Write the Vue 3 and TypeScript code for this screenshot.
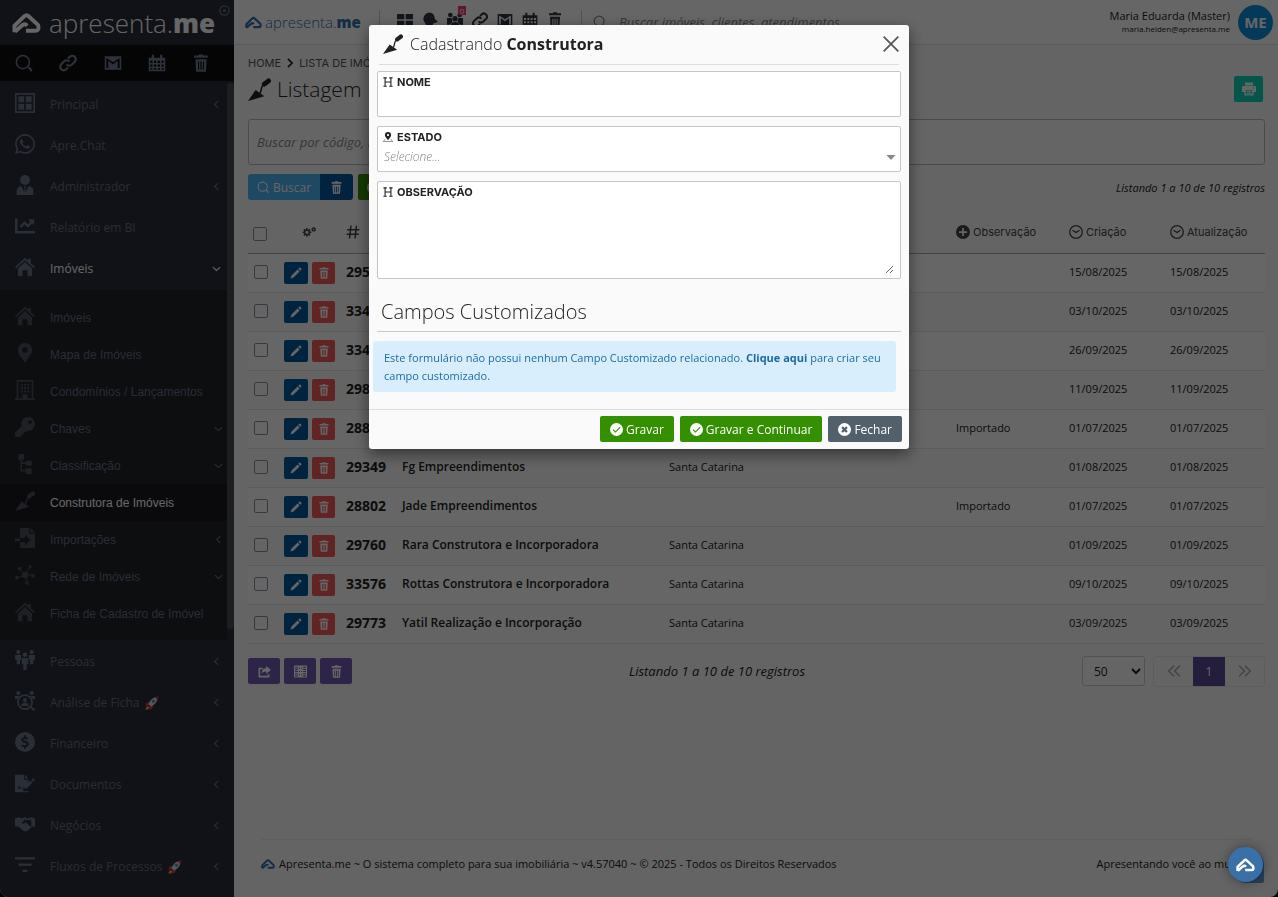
<script setup lang="ts">
import { h, ref } from 'vue'

interface Glyph {
  vb?: string
  d?: string
  s?: string
  w?: number
}

const glyphs: Record<string, Glyph> = {
  logo: { vb: '0 0 30 22', s: 'M2.5 20.5V14L12.8 4Q15 2 17.2 4L27 13.2Q28.6 19 24.5 19H14.5M3 20L10.8 13.2Q13.5 11.2 15.8 13.8', w: 4 },
  target: { s: 'M12 2a10 10 0 1 0 0 20a10 10 0 1 0 0-20zM12 10a2 2 0 1 0 0 4a2 2 0 1 0 0-4z', w: 3 },
  search: { s: 'M10.5 2a8.5 8.5 0 1 0 0 17a8.5 8.5 0 1 0 0-17zM17 17l5 5', w: 2 },
  finder: { s: 'M10.5 2a8.8 8.8 0 1 0 0 17.6a8.8 8.8 0 1 0 0-17.6z', d: 'M17 18.5l2-2l4.5 4.5l-2 2.5z', w: 2 },
  link: { s: 'M10 14a5 5 0 0 0 7 .3l4-4a4.6 4.6 0 0 0-6.6-6.6l-2.4 2.3M14 10a5 5 0 0 0-7-.3l-4 4a4.6 4.6 0 0 0 6.6 6.6l2.4-2.3', w: 3 },
  mail: { d: 'M1 3h22v18H1zM3.2 5.2v13.6h2.6V9l6.2 5l6.2-5v9.800h2.600V5.200L12 11z' },
  calendar: { d: 'M1 5h4V1h3v4h8V1h3v4h4v18H1zM3 9v3h3V9zM8 9v3h3V9zM13 9v3h3V9zM18 9v3h3V9zM3 14v3h3v-3zM8 14v3h3v-3zM13 14v3h3v-3zM18 14v3h3v-3zM3 19v2h3v-2zM8 19v2h3v-2zM13 19v2h3v-2zM18 19v2h3v-2z' },
  trash: { d: 'M3 2h6V0.500h6V2h6v3H3zM4.500 7h15l-1 16.500h-13zM8 10v11h1.500V10zM11.200 10v11h1.600V10zM14.500 10v11H16V10z' },
  panel: { d: 'M0 0h24v24H0zM2 2v20h20V2zM4 4h7v7H4zM13 4h7v7h-7zM4 13h7v7H4zM13 13h7v7h-7z' },
  tiles: { d: 'M0 3h11v8H0zM13 3h11v8H13zM0 13h11v8H0zM13 13h11v8H13z' },
  whatsapp: { vb: '0 32 448 448', d: 'M380.9 97.1C339 55.1 283.2 32 223.9 32c-122.4 0-222 99.6-222 222 0 39.1 10.2 77.3 29.6 111L0 480l117.7-30.9c32.400 17.700 68.900 27 106.100 27h.1c122.300 0 224.100-99.600 224.100-222 0-59.300-25.200-115-67.100-157zm-157 341.600c-33.200 0-65.700-8.900-94-25.700l-6.700-4-69.800 18.300L72 359.200l-4.400-7c-18.500-29.400-28.200-63.300-28.200-98.200 0-101.700 82.800-184.500 184.600-184.500 49.300 0 95.600 19.200 130.400 54.100 34.800 34.900 56.200 81.200 56.100 130.500 0 101.800-84.900 184.600-186.600 184.600zm101.200-138.200c-5.500-2.800-32.800-16.200-37.900-18-5.100-1.900-8.800-2.800-12.500 2.800-3.700 5.600-14.300 18-17.600 21.800-3.200 3.700-6.500 4.200-12 1.400-32.600-16.300-54-29.100-75.500-66-5.700-9.800 5.700-9.100 16.300-30.300 1.800-3.700.9-6.900-.5-9.700-1.400-2.800-12.500-30.100-17.100-41.200-4.500-10.800-9.100-9.300-12.500-9.500-3.200-.2-6.900-.2-10.600-.2-3.700 0-9.700 1.400-14.800 6.900-5.100 5.600-19.400 19-19.400 46.300 0 27.300 19.900 53.700 22.600 57.400 2.800 3.700 39.100 59.700 94.800 83.800 35.200 15.200 49 16.500 66.600 13.900 10.700-1.600 32.800-13.400 37.400-26.400 4.600-13 4.600-24.100 3.200-26.400-1.300-2.500-5-3.900-10.500-6.600z' },
  person: { d: 'M12 0a6 6 0 1 1 0 12a6 6 0 1 1 0-12zM2 24v-5q0-5.500 6-5.500l3 7l.500-4.500l-1-2.500h3l-1 2.500l.500 4.500l3-7q6 0 6 5.500v5z' },
  chart: { d: 'M0 3h3v15h21v3H0zM16 4h7v7l-2.200-2.200l-5.300 5.300l-4-4l-4 4L5.500 12L11.500 6l4 4l2.800-3z' },
  house: { d: 'M0 12L12 1l3.500 3.200V2h3.500v5.500L24 12l-1.400 1.600L12 4L1.400 13.600zM12 6l8.500 7.700V22q0 1-1 1H15v-7H9v7H4.500q-1 0-1-1v-8.300z' },
  pin: { d: 'M12 0c5 0 8.500 3.600 8.500 8.300C20.500 14 15 18 12 24C9 18 3.500 14 3.500 8.300C3.500 3.600 7 0 12 0zM12 5a3.300 3.300 0 1 0 0 6.600A3.300 3.300 0 1 0 12 5z' },
  building: { d: 'M2 0h20v22h2v2H0v-2h2zM4 2v20h5v-5h6v5h5V2zM7 4.500h2.500v2.500H7zM14.500 4.500H17V7h-2.500zM7 8.500h2.500V11H7zM14.500 8.500H17V11h-2.500zM7 12.500h2.500V15H7zM14.500 12.500H17V15h-2.500zM10.800 4.500h2.400V7h-2.400zM10.800 8.500h2.400V11h-2.400zM10.800 12.500h2.400V15h-2.400z' },
  key: { vb: '0 0 512 512', d: 'M512 176C512 273.200 433.200 352 336 352c-11.200 0-22.200-1-32.800-3l-24 27A24 24 0 0 1 261 384H224v40c0 13-11 24-24 24h-40v40c0 13-11 24-24 24H24c-13 0-24-11-24-24v-78c0-6.400 2.500-12.500 7-17l161.800-161.800C163 213.800 160 195 160 176 160 78.800 238.800 0 336 0 433.500 0 512 78.500 512 176zM336 128c0 26.500 21.500 48 48 48s48-21.500 48-48-21.500-48-48-48-48 21.500-48 48z' },
  tree: { d: 'M4 0h7v7H8.500v3H13V8h7v6h-7v-2H8.500v7H13v-2h7v7h-7v-3H6.500V7H4z' },
  trowel: { d: 'M0 24L8 12.500L17 19z', s: 'M12.500 16C14.500 13 13 9 16 7.500', w: 1.6 },
  grip: { s: 'M17 6.500L21.500 3', w: 5 },
  import: { d: 'M6 0h11v7h7v17H6v-7h6v4l6.500-6.500L12 8.500V12H6zM18.500 0L24 5.500h-5.500zM0 12.500h6V16H0z' },
  network: { d: 'M12 8a4 4 0 1 1 0 8a4 4 0 1 1 0-8zM5.500 2a2.300 2.300 0 1 1 0 4.600a2.300 2.300 0 1 1 0-4.600zM18 0a2 2 0 1 1 0 4.200a2 2 0 1 1 0-4.200zM2.300 13a2.300 2.300 0 1 1 0 4.600a2.300 2.300 0 1 1 0-4.600zM21.500 10.500a2.300 2.300 0 1 1 0 4.600a2.300 2.300 0 1 1 0-4.600zM14.500 19.500a2.200 2.200 0 1 1 0 4.400a2.200 2.200 0 1 1 0-4.400z', s: 'M12 12L5.500 4.500M12 12L18 2M12 12L2.300 15.300M12 12h9M12 12l2.500 9', w: 1.1 },
  people: { d: 'M4 0a2.500 2.500 0 1 1 0 5a2.500 2.500 0 1 1 0-5zM20 0a2.500 2.500 0 1 1 0 5a2.500 2.500 0 1 1 0-5zM12 3a2.800 2.800 0 1 1 0 5.600A2.800 2.800 0 1 1 12 3zM0 6h7.500v5l-1.500 1v5H2v-5l-2-1zM16.500 6H24v5l-2 1v5h-4v-5l-1.500-1zM8 9.500h8v7l-2 1V24h-4v-6.500l-2-1z' },
  inspect: { d: 'M4 0a2.500 2.500 0 1 1 0 5a2.500 2.500 0 1 1 0-5zM20 0a2.500 2.500 0 1 1 0 5a2.500 2.500 0 1 1 0-5zM0 6h6l-4 4H0zM18 6h6v4h-2zM12 8.500a2.500 2.500 0 1 1 0 5a2.500 2.500 0 1 1 0-5zM7.500 18q0-4 4.500-4t4.500 4zM18 19.500l1.500-1.500l4.500 4.300l-1.600 1.600z', s: 'M12 5a8.400 8.400 0 1 0 0 16.800A8.400 8.400 0 1 0 12 5z', w: 2.2 },
  dollar: { d: 'M12 0a12 12 0 1 1 0 24a12 12 0 1 1 0-24zM11 4v2C8.500 6.300 7.500 8 7.500 9.500c0 4.200 6.500 2.800 6.500 5c0 1.800-3.800 1.800-5.500.4l-1 2c1 .7 2.200 1 3.500 1.100v2h2v-2c2.500-.4 3.500-2 3.500-3.700c0-4.300-6.500-3-6.500-4.900c0-1.500 3.200-1.300 5-.3l.8-2c-.8-.5-1.800-.8-2.800-.9V4z' },
  sign: { d: 'M0 2h11v6h5v3.500l-6 6v4.500h5l1-1v2H0zM12 2l4.500 4.500H12zM21.500 6l2.500 2.500l-2 2L19.500 8zM18.500 9l2.500 2.500l-7 7l-3 .5l.5-3zM3 19l2-4l1.500 3l1.500-1v1.500H3z' },
  handshake: { d: 'M0 5l5-1l3 1.500L12 4l4 1.500L19 4l5 1v10h-3.500l-4 4l-1.500 1l-2 1l-3-1L4 15H0zM12 6.500L8 10.500q2 2.500 5-.5l6 5.500l.5-1V6.500L16 7.500z' },
  filter: { s: 'M0 4h24M4 11.500h16M9 19h6', w: 2.6 },
  left: { s: 'M16 4L8 12l8 8', w: 2.4 },
  down: { s: 'M4 9l8 7l8-7', w: 2.6 },
  right: { s: 'M7 2l10 10L7 22', w: 4 },
  chat: { d: 'M2 12C2 5 6 1 11 1c6 0 8 4 8 9l5 5l-7 2l-2 6H8z' },
  users: { d: 'M12 6a4 4 0 1 1 0 8a4 4 0 1 1 0-8zM5 1a3.500 3.500 0 1 1 0 7a3.500 3.500 0 1 1 0-7zM19 1a3.500 3.500 0 1 1 0 7a3.500 3.500 0 1 1 0-7zM0 9h7l1 6l-4 4H0zM17 9h7v10h-4l-4-4zM5 23q0-8 7-8t7 8z' },
  gears: { s: 'M8.500 8.500a4 4 0 1 0 0 8a4 4 0 1 0 0-8zM8.500 5v3M8.500 17v3M1 12.500h3M13 12.500h3M3.200 7.200l2.100 2.100M11.700 15.700l2.100 2.100M3.200 17.800l2.100-2.100M11.700 9.300l2.100-2.100M20 5a2.500 2.500 0 1 0 0 5a2.500 2.500 0 1 0 0-5z', w: 2.600 },
  hash: { s: 'M8.500 1L6 23M18 1l-2.500 22M2 8h21M1 16h21', w: 2.6 },
  pencil: { d: 'M18.500 1.500q1-1 2 0l2 2q1 1 0 2L20.500 7.500l-4-4zM15.200 4.800l4 4L7 21l-6 2l2-6z' },
  share: { d: 'M15 2l9 7l-9 7v-4q-6-.5-8 4q0-10 8-10zM1 5h8v3H4v12h14v-3h3v6H1z' },
  columns: { d: 'M0 1h24v22H0zM2 3v2h5V3zM2 7v2h5V7zM2 11v2h5v-2zM2 15v2h5v-2zM2 19v2h5v-2zM17 3v2h5V3zM17 7v2h5V7zM17 11v2h5v-2zM17 15v2h5v-2zM17 19v2h5v-2zM9 5h2v2H9zM13 5h2v2h-2zM9 11h2v2H9zM13 11h2v2h-2zM9 17h2v2H9zM13 17h2v2h-2z' },
  printer: { d: 'M5 1h14v5H5zM2 7h20q2 0 2 2v8h-4v6H4v-6H0V9q0-2 2-2zM6.500 14v7h11v-7zM18.500 9v2h2V9zM8 15.500h8V17H8zM8 18.500h8V20H8z' },
  plus: { d: 'M12 0a12 12 0 1 1 0 24a12 12 0 1 1 0-24zM10.500 5v5.500H5v3h5.500V19h3v-5.500H19v-3h-5.500V5z' },
  clock: { s: 'M12 1.200a10.800 10.800 0 1 0 0 21.600a10.800 10.800 0 1 0 0-21.600zM6 9l6 4l6-4', w: 2.2 },
  check: { d: 'M12 0a12 12 0 1 1 0 24a12 12 0 1 1 0-24zM6.500 11.500L5 13l5 5L19.500 8.500L18 7l-8 8z' },
  cancel: { d: 'M12 0a12 12 0 1 1 0 24a12 12 0 1 1 0-24zM9 6L6 9l3 3l-3 3l3 3l3-3l3 3l3-3l-3-3l3-3l-3-3l-3 3z' },
  close: { s: 'M1 1l22 22M23 1L1 23', w: 2.6 },
  heading: { s: 'M1 2h8M15 2h8M1 22h8M15 22h8M5 2v20M19 2v20M5 12h14', w: 2.6 },
  place: { d: 'M12 0c4.500 0 7.500 3.200 7.500 7.200C19.500 12 14.500 15 12 20C9.500 15 4.500 12 4.500 7.200C4.500 3.200 7.500 0 12 0zM12 4.500a2.700 2.700 0 1 0 0 5.400a2.700 2.700 0 1 0 0-5.400z', s: 'M5 17l-4 6h22l-4-6', w: 1.2 },
  caret: { d: 'M1 7h22L12 19z' },
  first: { s: 'M12 3l-9 9l9 9M22 3l-9 9l9 9', w: 2.6 },
  last: { s: 'M12 3l9 9l-9 9M2 3l9 9l-9 9', w: 2.6 },
}

const Icon = (props: { name: string }) => {
  const g = glyphs[props.name]
  const parts = []
  if (g.d) parts.push(h('path', { d: g.d, fill: 'currentColor', 'fill-rule': 'evenodd' }))
  if (g.s) parts.push(h('path', { d: g.s, fill: 'none', stroke: 'currentColor', 'stroke-width': g.w }))
  if (props.name === 'trowel') {
    parts.push(h('path', { d: glyphs.grip.s, fill: 'none', stroke: 'currentColor', 'stroke-width': 5, 'stroke-linecap': 'round' }))
  }
  return h('svg', { viewBox: g.vb ?? '0 0 24 24', class: 'icon', 'aria-hidden': 'true' }, parts)
}
Icon.props = ['name']

interface MenuItem {
  label: string
  icon: string
  arrow?: 'left' | 'down'
  active?: boolean
  rocket?: boolean
}

const topMenu: MenuItem[] = [
  { label: 'Principal', icon: 'panel', arrow: 'left' },
  { label: 'Apre.Chat', icon: 'whatsapp' },
  { label: 'Administrador', icon: 'person', arrow: 'left' },
  { label: 'Relatório em BI', icon: 'chart' },
  { label: 'Imóveis', icon: 'house', arrow: 'down', active: true },
]
const subMenu: MenuItem[] = [
  { label: 'Imóveis', icon: 'house' },
  { label: 'Mapa de Imóveis', icon: 'pin' },
  { label: 'Condomínios / Lançamentos', icon: 'building' },
  { label: 'Chaves', icon: 'key', arrow: 'down' },
  { label: 'Classificação', icon: 'tree', arrow: 'down' },
  { label: 'Construtora de Imóveis', icon: 'trowel', active: true },
  { label: 'Importações', icon: 'import', arrow: 'left' },
  { label: 'Rede de Imóveis', icon: 'network', arrow: 'down' },
  { label: 'Ficha de Cadastro de Imóvel', icon: 'house' },
]
const bottomMenu: MenuItem[] = [
  { label: 'Pessoas', icon: 'people', arrow: 'left' },
  { label: 'Análise de Ficha', icon: 'inspect', arrow: 'left', rocket: true },
  { label: 'Financeiro', icon: 'dollar', arrow: 'left' },
  { label: 'Documentos', icon: 'sign', arrow: 'left' },
  { label: 'Negócios', icon: 'handshake', arrow: 'left' },
  { label: 'Fluxos de Processos', icon: 'filter', arrow: 'left', rocket: true },
]

const rows = [
  { id: '295', name: '', state: '', note: '', created: '15/08/2025', updated: '15/08/2025' },
  { id: '334', name: '', state: '', note: '', created: '03/10/2025', updated: '03/10/2025' },
  { id: '334', name: '', state: '', note: '', created: '26/09/2025', updated: '26/09/2025' },
  { id: '298', name: '', state: '', note: '', created: '11/09/2025', updated: '11/09/2025' },
  { id: '288', name: '', state: '', note: 'Importado', created: '01/07/2025', updated: '01/07/2025' },
  { id: '29349', name: 'Fg Empreendimentos', state: 'Santa Catarina', note: '', created: '01/08/2025', updated: '01/08/2025' },
  { id: '28802', name: 'Jade Empreendimentos', state: '', note: 'Importado', created: '01/07/2025', updated: '01/07/2025' },
  { id: '29760', name: 'Rara Construtora e Incorporadora', state: 'Santa Catarina', note: '', created: '01/09/2025', updated: '01/09/2025' },
  { id: '33576', name: 'Rottas Construtora e Incorporadora', state: 'Santa Catarina', note: '', created: '09/10/2025', updated: '09/10/2025' },
  { id: '29773', name: 'Yatil Realização e Incorporação', state: 'Santa Catarina', note: '', created: '03/09/2025', updated: '03/09/2025' },
]

const shortcuts = ['finder', 'link', 'mail', 'calendar', 'trash']
const tools = ['tiles', 'chat', 'users', 'link', 'mail', 'calendar', 'trash']

const open = ref(true)
const nome = ref('')
const estado = ref('')
const observacao = ref('')
const pageSize = ref('50')
</script>

<template>
  <div class="page">
    <aside class="sidebar">
      <div class="brand">
        <Icon name="logo" class="brand-mark" />
        <span class="wordmark">apresenta.<b>me</b></span>
        <button class="pin-toggle" aria-label="Fixar menu"><Icon name="target" /></button>
      </div>
      <div class="shortcuts">
        <button v-for="s in shortcuts" :key="s" :aria-label="s"><Icon :name="s" /></button>
      </div>
      <nav class="menu" aria-label="Menu principal">
        <ul class="group">
          <li v-for="m in topMenu" :key="m.label">
            <a href="#" class="item" :class="{ active: m.active }">
              <Icon :name="m.icon" class="lead" /><span class="label">{{ m.label }}</span>
              <Icon v-if="m.arrow" :name="m.arrow" class="arrow" />
            </a>
          </li>
        </ul>
        <ul class="sub">
          <li v-for="m in subMenu" :key="m.label">
            <a href="#" class="item" :class="{ active: m.active }">
              <Icon :name="m.icon" class="lead" /><span class="label">{{ m.label }}</span>
              <Icon v-if="m.arrow" :name="m.arrow" class="arrow" />
            </a>
          </li>
        </ul>
        <ul class="group last-group">
          <li v-for="m in bottomMenu" :key="m.label">
            <a href="#" class="item">
              <Icon :name="m.icon" class="lead" />
              <span class="label">
                {{ m.label }}
                <svg v-if="m.rocket" class="rocket" viewBox="0 0 24 24" aria-hidden="true">
                  <path d="M7 10L2 12l-1 5l6-1zM14 17l-2 5l-5 1l1-6z" fill="#e0305a" />
                  <path d="M6 14C9 6 14 2 21 1.500C21.500 9 18 14.500 10 18z" fill="#d5dbe3" />
                  <path d="M16.500 2.300Q19 1 23 0.500Q23 4 21.300 7.200z" fill="#e0305a" />
                  <circle cx="14.500" cy="9" r="2.800" fill="#3f8fd8" />
                  <path d="M5 17l3 3l-3 3l-4 .500l.500-4z" fill="#f79a1e" />
                </svg>
              </span>
              <Icon v-if="m.arrow" :name="m.arrow" class="arrow" />
            </a>
          </li>
        </ul>
        <div class="scrollbar"></div>
      </nav>
    </aside>

    <main class="main">
      <header class="topbar">
        <a href="#" class="small-brand"><Icon name="logo" class="small-mark" /><span class="wordmark">apresenta.<b>me</b></span></a>
        <div class="tools">
          <button v-for="t in tools" :key="t" :aria-label="t">
            <Icon :name="t" /><span v-if="t === 'users'" class="badge">0</span>
          </button>
        </div>
        <label class="global-search">
          <Icon name="search" />
          <input type="search" placeholder="Buscar imóveis, clientes, atendimentos" aria-label="Busca geral" />
        </label>
        <div class="account">
          <div class="who"><span>Maria Eduarda (Master)</span><small>maria.heiden@apresenta.me</small></div>
          <span class="avatar">ME</span>
        </div>
      </header>

      <section class="content">
        <div class="crumbs"><a href="#">HOME</a><Icon name="right" /><a href="#">LISTA DE IMÓVEIS</a></div>
        <div class="heading">
          <Icon name="trowel" /><h1>Listagem</h1>
          <button class="print" aria-label="Imprimir"><Icon name="printer" /></button>
        </div>
        <input class="filter" type="text" placeholder="Buscar por código, nome" aria-label="Filtro" />
        <div class="actions">
          <div class="pair">
            <button class="btn sky"><Icon name="search" />Buscar</button>
            <button class="btn navy" aria-label="Limpar"><Icon name="trash" /></button>
          </div>
          <button class="btn green" aria-label="Novo"><Icon name="plus" /></button>
          <em class="count">Listando 1 a 10 de 10 registros</em>
        </div>

        <table class="grid">
          <colgroup>
            <col class="c-check" /><col class="c-act" /><col class="c-id" /><col class="c-name" /><col /><col class="c-note" /><col class="c-date" /><col class="c-upd" />
          </colgroup>
          <thead>
            <tr>
              <th><input type="checkbox" aria-label="Selecionar todos" /></th>
              <th class="gear"><Icon name="gears" /></th>
              <th><Icon name="hash" class="hash" /></th>
              <th></th>
              <th></th>
              <th><span class="th"><Icon name="plus" />Observação</span></th>
              <th><span class="th"><Icon name="clock" />Criação</span></th>
              <th><span class="th"><Icon name="clock" />Atualização</span></th>
            </tr>
          </thead>
          <tbody>
            <tr v-for="(r, i) in rows" :key="i">
              <td class="pick"><input type="checkbox" :aria-label="'Selecionar ' + r.id" /></td>
              <td class="acts">
                <div class="row-actions">
                  <button class="edit" aria-label="Editar"><Icon name="pencil" /></button>
                  <button class="remove" aria-label="Excluir"><Icon name="trash" /></button>
                </div>
              </td>
              <td class="id">{{ r.id }}</td>
              <td class="name">{{ r.name }}</td>
              <td>{{ r.state }}</td>
              <td>{{ r.note }}</td>
              <td>{{ r.created }}</td>
              <td>{{ r.updated }}</td>
            </tr>
          </tbody>
        </table>

        <div class="below">
          <div class="bulk">
            <button class="btn purple" aria-label="Exportar"><Icon name="share" /></button>
            <button class="btn purple" aria-label="Colunas"><Icon name="columns" /></button>
            <button class="btn purple" aria-label="Excluir selecionados"><Icon name="trash" /></button>
          </div>
          <em>Listando 1 a 10 de 10 registros</em>
          <div class="paging">
            <select v-model="pageSize" aria-label="Registros por página"><option>50</option></select>
            <div class="pager">
              <button aria-label="Anterior"><Icon name="first" /></button>
              <button class="current">1</button>
              <button aria-label="Próxima"><Icon name="last" /></button>
            </div>
          </div>
        </div>

        <footer class="foot">
          <Icon name="logo" />
          <span>Apresenta.me ~ O sistema completo para sua imobiliária ~ v4.57040 ~ © 2025 - Todos os Direitos Reservados</span>
          <span class="motto">Apresentando você ao mundo</span>
        </footer>
      </section>
    </main>

    <div class="fab-base"></div>

    <div v-if="open" class="backdrop">
      <form class="modal" role="dialog" aria-labelledby="modal-title" @submit.prevent>
        <div class="modal-head">
          <Icon name="trowel" />
          <h2 id="modal-title">Cadastrando <b>Construtora</b></h2>
          <button type="button" class="x" aria-label="Fechar janela" @click="open = false"><Icon name="close" /></button>
        </div>
        <div class="modal-body">
          <div class="field">
            <label for="nome"><Icon name="heading" />NOME</label>
            <input id="nome" v-model="nome" type="text" />
          </div>
          <div class="field">
            <label for="estado"><Icon name="place" />ESTADO</label>
            <select id="estado" v-model="estado">
              <option value="">Selecione...</option>
              <option>Santa Catarina</option>
            </select>
            <Icon name="caret" class="caret" />
          </div>
          <div class="field">
            <label for="obs"><Icon name="heading" />OBSERVAÇÃO</label>
            <textarea id="obs" v-model="observacao"></textarea>
          </div>
          <h3>Campos Customizados</h3>
          <p class="notice">
            Este formulário não possui nenhum Campo Customizado relacionado. <a href="#">Clique aqui</a> para criar seu campo customizado.
          </p>
        </div>
        <div class="modal-foot">
          <button type="submit" class="btn save"><Icon name="check" />Gravar</button>
          <button type="button" class="btn save"><Icon name="check" />Gravar e Continuar</button>
          <button type="button" class="btn slate" @click="open = false"><Icon name="cancel" />Fechar</button>
        </div>
      </form>
    </div>

    <button class="fab" aria-label="Ajuda"><Icon name="logo" /></button>
  </div>
</template>

<style>
html,
body {
  margin: 0;
  background: #000;
}
</style>

<style scoped>
.page,
.page * {
  box-sizing: border-box;
}
.page {
  display: flex;
  min-height: 100vh;
  overflow: hidden;
  border-radius: 0 0 8px 8px;
  background: #fafafa;
  color: #222;
  font-family: "Open Sans", "Noto Sans", sans-serif;
  font-size: 12px;
}
button,
input,
select,
textarea {
  font: inherit;
  color: inherit;
}
button {
  border: 0;
  padding: 0;
  background: none;
  display: flex;
  align-items: center;
  justify-content: center;
  cursor: pointer;
}
a {
  color: inherit;
  text-decoration: none;
}
ul {
  list-style: none;
  margin: 0;
  padding: 0;
}
.icon {
  width: 14px;
  height: 14px;
  flex: none;
  display: block;
}

.sidebar {
  width: 234px;
  flex: none;
  background: #2b2d3a;
  color: #667085;
}
.brand {
  position: relative;
  height: 45px;
  display: flex;
  align-items: center;
  gap: 8px;
  padding: 0 12px;
  color: #fff;
}
.brand-mark {
  width: 29px;
  height: 22px;
}
.wordmark {
  font-weight: 300;
}
.wordmark b {
  font-weight: 800;
}
.brand .wordmark {
  font-size: 26px;
  line-height: 44px;
}
.pin-toggle {
  position: absolute;
  top: 5px;
  right: 4px;
  color: #667085;
}
.pin-toggle .icon {
  width: 11px;
  height: 11px;
}
.shortcuts {
  height: 36px;
  padding: 0 23px 0 14px;
  background: #0e0e0e;
  display: flex;
  align-items: center;
  justify-content: space-between;
  color: #707a90;
}
.shortcuts button {
  width: 20px;
}
.shortcuts .icon {
  width: 18px;
  height: 18px;
}
.menu {
  position: relative;
}
.group {
  padding: 3px 7px 1px 0;
}
.last-group {
  padding-top: 1px;
}
.item {
  height: 41px;
  display: flex;
  align-items: center;
  padding: 0 5px 0 15px;
}
.group .label {
  font-size: 12px;
  display: flex;
  align-items: center;
  gap: 6px;
}
.lead {
  width: 20px;
  height: 20px;
  margin: 0 15px 4px 0;
  color: #69738a;
}
.label {
  flex: 1;
}
.arrow {
  width: 11px;
  height: 11px;
}
.item.active {
  color: #fff;
}
.rocket {
  width: 14px;
  height: 14px;
}
.sub {
  margin-right: 7px;
  padding: 9px 0 8px;
  background: #212329;
  font-family: "Liberation Sans", Arial, sans-serif;
  font-size: 12px;
}
.sub .item {
  height: 37px;
  padding-right: 3px;
}
.sub .item.active {
  background: #191b20;
}
.sub .lead {
  color: #4c505c;
}
.scrollbar {
  position: absolute;
  top: 2px;
  right: 0;
  width: 7px;
  height: 546px;
  border-radius: 4px;
  background: #4a4b4e;
}

.main {
  flex: 1;
  min-width: 0;
  display: flex;
  flex-direction: column;
}
.topbar {
  height: 45px;
  display: flex;
  align-items: center;
  padding: 0 5px 0 11px;
  background: #fff;
  border-bottom: 1px solid #e2e2e2;
}
.small-brand {
  display: flex;
  align-items: center;
  gap: 3px;
  width: 135px;
  height: 24px;
  border-right: 1px solid #ccc;
  color: #336fb0;
}
.small-mark {
  width: 17px;
  height: 13px;
}
.small-brand .wordmark {
  font-size: 15px;
  line-height: 24px;
}
.tools {
  display: flex;
  gap: 9px;
  height: 24px;
  padding: 0 18px 4px 17px;
  border-right: 1px solid #ccc;
  color: #2f3640;
}
.tools button {
  position: relative;
  width: 16px;
}
.tools .icon {
  width: 16px;
  height: 16px;
}
.badge {
  position: absolute;
  top: -4px;
  right: -3px;
  width: 8px;
  height: 9px;
  background: #f0386b;
  color: #fff;
  font-size: 8px;
  line-height: 9px;
}
.global-search {
  flex: 1;
  display: flex;
  align-items: center;
  gap: 12px;
  padding-left: 11px;
  color: #888;
}
.global-search input {
  flex: 1;
  border: 0;
  padding: 0;
  background: none;
  font-size: 13px;
  font-style: italic;
  outline: 0;
}
.account {
  display: flex;
  align-items: center;
  gap: 8px;
}
.who {
  display: flex;
  flex-direction: column;
  align-items: flex-end;
  font-size: 11px;
  line-height: 14px;
}
.who small {
  font-size: 8px;
  line-height: 12px;
}
.avatar {
  width: 35px;
  height: 35px;
  border-radius: 50%;
  background: #0e8ee0;
  color: #fff;
  font-size: 15px;
  font-weight: 700;
  line-height: 35px;
  text-align: center;
}

.content {
  flex: 1;
  display: flex;
  flex-direction: column;
  padding: 10px 13px 0 14px;
}
.crumbs {
  display: flex;
  align-items: center;
  gap: 4px;
  height: 15px;
  color: #555;
  font-family: Inter, sans-serif;
  font-size: 11px;
}
.crumbs .icon {
  width: 10px;
  height: 10px;
  color: #222;
}
.heading {
  height: 38px;
  display: flex;
  align-items: center;
  gap: 6px;
}
.heading > .icon {
  width: 23px;
  height: 23px;
}
.heading h1 {
  flex: 1;
  margin: 0;
  font-size: 21px;
  font-weight: 300;
  line-height: 28px;
}
.print {
  width: 29px;
  height: 26px;
  margin-right: 2px;
  border-radius: 2px;
  background: #0fd5b8;
  color: #fff;
}
.filter {
  width: 100%;
  height: 46px;
  margin-top: 11px;
  padding: 0 8px;
  border: 1px solid #bbb;
  border-radius: 3px;
  background: #fcfcfc;
  font-size: 13px;
  font-style: italic;
}
.filter::placeholder,
.global-search input::placeholder {
  color: #888;
  opacity: 1;
}
.actions {
  display: flex;
  align-items: center;
  gap: 5px;
  margin-top: 9px;
}
.pair {
  display: flex;
  border-radius: 3px;
  overflow: hidden;
}
.btn {
  height: 26px;
  gap: 3px;
  padding: 0 9px;
  border-radius: 2px;
  color: #fff;
  font-size: 12px;
}
.btn .icon {
  width: 13px;
  height: 13px;
}
.pair .btn {
  border-radius: 0;
}
.sky {
  background: #4eb3f5;
}
.navy {
  width: 33px;
  background: #005a9e;
}
.green,
.save {
  background: #349000;
}
.count {
  margin-left: auto;
  font-size: 11px;
}

.grid {
  width: 100%;
  table-layout: fixed;
  border-collapse: collapse;
}
.c-check { width: 36px; }
.c-act { width: 62px; }
.c-id { width: 56px; }
.c-name { width: 267px; }
.c-note { width: 113px; }
.c-date { width: 101px; }
.c-upd { width: 95px; }
.grid th,
.grid td {
  padding: 0;
  text-align: left;
  white-space: nowrap;
}
.grid th {
  height: 53px;
  padding-top: 12px;
  border-bottom: 1px solid #aaa;
  color: #444;
  font-family: Inter, sans-serif;
  font-size: 11px;
  font-weight: 400;
}
.grid td {
  height: 39px;
  padding-bottom: 2px;
  border-bottom: 1px solid #e6e6e6;
  font-size: 11px;
}
.grid .acts {
  padding-bottom: 0;
}
.grid tbody tr:nth-child(odd) {
  background: #fff;
}
.grid input {
  appearance: none;
  display: block;
  width: 14px;
  height: 14px;
  margin: 4px 0 0 5px;
  border: 1px solid #8c8ca0;
  border-radius: 2px;
}
.grid .pick input {
  margin: 0 0 0 6px;
}
.gear .icon {
  margin-left: 18px;
}
.th {
  display: flex;
  align-items: center;
  gap: 3px;
}
.row-actions {
  display: flex;
  gap: 4px;
}
.row-actions button {
  height: 22px;
  border-radius: 2px;
  color: #fff;
}
.row-actions .icon {
  width: 12px;
  height: 12px;
}
.edit {
  width: 24px;
  background: #005a9e;
}
.remove {
  width: 23px;
  background: #f05a5a;
}
.grid .id {
  font-size: 14px;
  font-weight: 700;
}
.grid .name {
  font-size: 12px;
  font-weight: 600;
}

.below {
  display: flex;
  justify-content: space-between;
  align-items: center;
  margin-top: 12px;
}
.below em {
  font-size: 13px;
}
.bulk {
  display: flex;
  gap: 4px;
}
.purple {
  width: 32px;
  padding: 0;
  background: #705ab4;
}
.paging {
  display: flex;
  justify-content: flex-end;
  align-items: center;
  gap: 8px;
}
.paging select {
  width: 63px;
  height: 30px;
  padding: 0 0 0 7px;
  border: 1px solid #ccc;
  border-radius: 3px;
  background: #fdfdfd;
  font-size: 12px;
}
.pager {
  display: flex;
  border: 1px solid #e8e8e8;
  border-radius: 3px;
}
.pager button {
  width: 39px;
  height: 29px;
  color: #aaa;
}
.pager .current {
  width: 32px;
  background: #5a4a96;
  color: #fff;
}
.foot {
  display: flex;
  align-items: center;
  gap: 4px;
  height: 58px;
  margin: auto 14px 0 13px;
  padding-bottom: 10px;
  border-top: 1px solid #ececec;
  font-size: 11px;
  white-space: nowrap;
}
.foot .icon {
  color: #336fb0;
}
.motto {
  margin-left: auto;
}

.fab-base,
.fab {
  position: fixed;
  right: 14px;
  bottom: 14px;
  width: 35px;
  height: 35px;
  border-radius: 18px 18px 2px 18px;
  background: #64a0dc;
}
.fab {
  bottom: 15px;
  right: 15px;
  border-radius: 50%;
  background: #3a70a8;
  color: #fff;
  box-shadow: 0 0 12px rgba(0, 0, 0, 0.4);
}
.fab .icon {
  width: 19px;
  height: 16px;
}

.backdrop {
  position: fixed;
  inset: 0;
  background: rgba(0, 0, 0, 0.6);
}
.modal {
  width: 540px;
  max-width: 100%;
  margin: 25px auto 0;
  border-radius: 3px;
  background: #fafafa;
  box-shadow: 0 5px 15px rgba(0, 0, 0, 0.5);
}
.modal-head {
  display: flex;
  align-items: center;
  gap: 7px;
  height: 40px;
  margin: 0 10px;
  padding: 0 0 2px 4px;
  border-bottom: 1px solid #ddd;
}
.modal-head > .icon {
  width: 20px;
  height: 20px;
}
.modal-head h2 {
  flex: 1;
  margin: 0;
  font-size: 16px;
  font-weight: 300;
  line-height: 24px;
}
.modal-head b,
.notice a {
  font-weight: 700;
}
.x .icon {
  width: 16px;
  height: 16px;
  color: #555;
}
.modal-body {
  padding: 6px 8px 17px;
}
.field {
  position: relative;
  display: flex;
  flex-direction: column;
  margin-bottom: 9px;
  border: 1px solid #c6c6c6;
  border-radius: 2px;
  background: #fff;
}
.field label {
  display: flex;
  align-items: center;
  gap: 4px;
  height: 20px;
  padding-left: 5px;
  font-family: Inter, sans-serif;
  font-size: 11px;
  font-weight: 700;
}
.field label .icon {
  width: 10px;
  height: 10px;
}
.field input,
.field select,
.field textarea {
  display: block;
  width: 100%;
  height: 24px;
  padding: 0 6px;
  border: 0;
  background: none;
  outline: 0;
}
.field select {
  appearance: none;
  padding-bottom: 6px;
  color: #888;
  font-size: 12px;
  font-style: italic;
  font-weight: 300;
}
.field textarea {
  width: auto;
  height: 72px;
  margin: 0 6px 4px 0;
  resize: both;
}
.caret {
  position: absolute;
  right: 4px;
  bottom: 9px;
  width: 10px;
  height: 10px;
  color: #888;
}
.modal-body h3 {
  margin: 0 0 9px;
  padding: 10px 4px 5px;
  border-bottom: 1px solid #ccc;
  font-size: 20px;
  font-weight: 300;
  line-height: 28px;
}
.notice {
  margin: 0 5px 0 -4px;
  padding: 8px 11px 7px;
  border-radius: 3px;
  background: #d9eefd;
  color: #1d6ba5;
  font-size: 11px;
  line-height: 18px;
}
.modal-foot {
  display: flex;
  justify-content: flex-end;
  gap: 6px;
  padding: 6px 7px 7px;
  border-top: 1px solid #ddd;
}
.modal-foot .btn {
  padding: 0 10px;
}
.slate {
  background: #52606c;
}
</style>
